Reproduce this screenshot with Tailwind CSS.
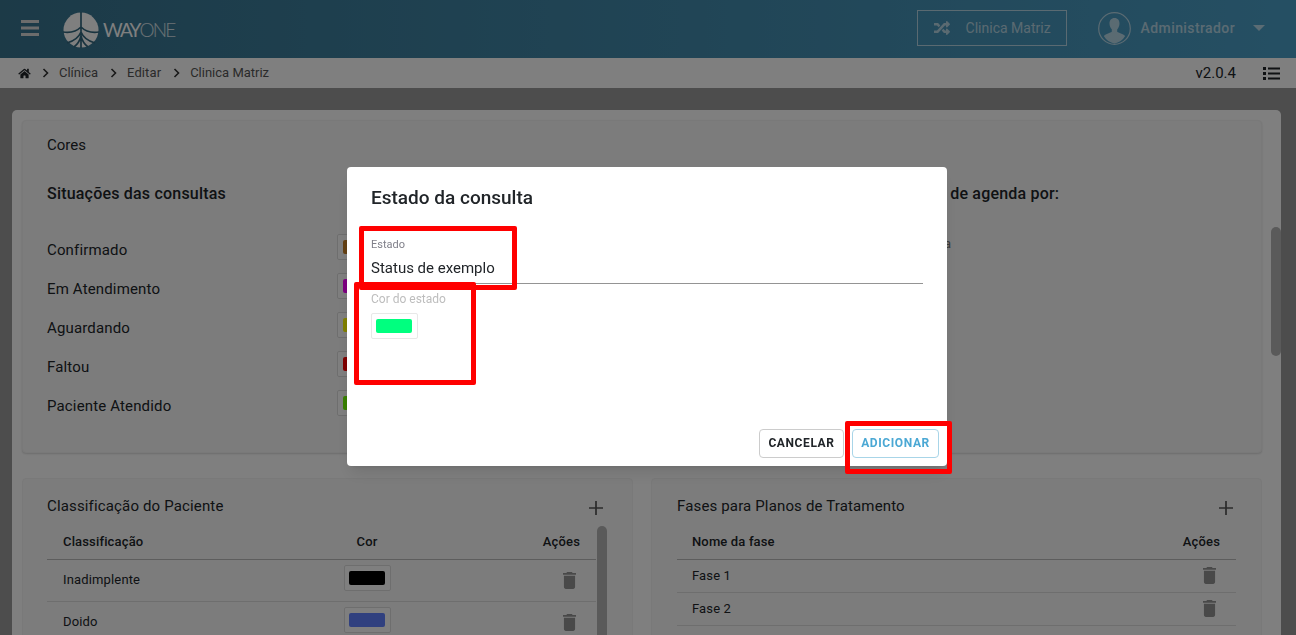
<!DOCTYPE html>
<html lang="pt-BR">
<head>
  <meta charset="UTF-8">
  <title>Clínica Matriz</title>
  <script src="https://cdn.jsdelivr.net/npm/@tailwindcss/browser@4"></script>
</head>
<body class="h-[635px] overflow-hidden bg-[#9a9a9a] font-['Roboto',sans-serif] text-[#212529]">
  <!-- topo -->
  <header class="flex h-[58px] items-center bg-gradient-to-r from-[#38748f] to-[#4b9fc7] pb-[2px] text-white">
    <svg class="ml-[21px] h-[16px] w-[18px]" viewBox="0 0 18 16" fill="#d8d8d8"><rect width="18" height="3" y="0"/><rect width="18" height="3" y="6.500"/><rect width="18" height="3" y="13"/></svg>
    <svg class="ml-[24px] mt-[4px] h-[36px] w-[36px]" viewBox="0 0 36 36">
      <circle cx="18" cy="18" r="17.500" fill="#ffffff"/>
      <path d="M18 0V36M18 15C14 19 7 21 0 20M18 15C22 19 29 21 36 20M18 20C16 25 11 29 4 31M18 20C20 25 25 29 32 31M18 24C17 28 15 32 11 35M18 24C19 28 21 32 25 35" stroke="#32677f" stroke-width="1.700" fill="none"/>
    </svg>
    <span class="ml-[4px] mt-[4px] font-['Lato',sans-serif] text-[19px] tracking-[-1.900px] text-white">WAY<span class="font-light text-white/80">ONE</span></span>
    <div class="ml-auto flex h-[36px] w-[150px] items-center border border-white/60 pl-[15px] text-[14px] text-white/60">
      <svg class="h-[16px] w-[18px]" viewBox="0 0 512 512" fill="currentColor"><path d="M504.971 359.029c9.373 9.373 9.373 24.569 0 33.941l-80 79.984c-15.01 15.01-40.971 4.49-40.971-16.971V416h-58.785a12.004 12.004 0 0 1-8.773-3.812l-70.556-75.596 53.333-57.143L352 336h32v-39.981c0-21.438 25.943-31.998 40.971-16.971l80 79.981zM12 176h84l52.781 56.551 53.333-57.143-70.556-75.596A11.999 11.999 0 0 0 122.785 96H12c-6.627 0-12 5.373-12 12v56c0 6.627 5.373 12 12 12zm372 0v39.984c0 21.46 25.961 31.98 40.971 16.971l80-79.984c9.373-9.373 9.373-24.569 0-33.941l-80-79.981C409.943 24.021 384 34.582 384 56.019V96h-58.785a12.004 12.004 0 0 0-8.773 3.812L96 336H12c-6.627 0-12 5.373-12 12v56c0 6.627 5.373 12 12 12h110.785c3.326 0 6.503-1.381 8.773-3.812L352 176h32z"/></svg>
      <span class="ml-[15px]">Clinica Matriz</span>
    </div>
    <svg class="ml-[31px] h-[33px] w-[33px]" viewBox="0 0 33 33">
      <circle cx="16.500" cy="16.500" r="15.800" fill="none" stroke="#ffffff" stroke-opacity=".6" stroke-width="1.200"/>
      <path d="M16.500 6c-3.200 0-5 2.300-5 5.500 0 2.400 1 4.500 2.300 5.800v2.400c-1.500 1.200-5.800 2-8 4.300A15.500 15.500 0 0 0 16.500 31.500a15.500 15.500 0 0 0 10.700-7.400c-2.200-2.300-6.500-3.100-8-4.300v-2.400c1.300-1.300 2.300-3.400 2.300-5.800 0-3.200-1.800-5.500-5-5.500z" fill="#ffffff" fill-opacity=".6"/>
    </svg>
    <span class="ml-[10px] text-[14px] font-medium tracking-[.4px] text-white/60">Administrador</span>
    <svg class="ml-[18px] mr-[31px] h-[6px] w-[12px]" viewBox="0 0 12 6" fill="#ffffff" fill-opacity=".6"><path d="M0 0H12L6 6Z"/></svg>
  </header>

  <!-- breadcrumb -->
  <nav class="flex h-[30px] items-center bg-white pl-[18px] pr-[16px] text-[13px] text-[#555]">
    <svg class="h-[11px] w-[13px]" viewBox="0 0 576 512" fill="#212529"><path d="M280.37 148.26L96 300.11V464a16 16 0 0 0 16 16l112.06-.29a16 16 0 0 0 15.92-16V368a16 16 0 0 1 16-16h64a16 16 0 0 1 16 16v95.64a16 16 0 0 0 16 16.05L464 480a16 16 0 0 0 16-16V300L295.67 148.26a12.19 12.19 0 0 0-15.3 0zM571.6 251.47L488 182.56V44.05a12 12 0 0 0-12-12h-56a12 12 0 0 0-12 12v72.61L318.47 43a48 48 0 0 0-61 0L4.34 251.47a12 12 0 0 0-1.6 16.9l25.5 31A12 12 0 0 0 45.15 301l235.22-193.74a12.19 12.19 0 0 1 15.3 0L530.9 301a12 12 0 0 0 16.9-1.6l25.5-31a12 12 0 0 0-1.7-16.93z"/></svg>
    <svg class="ml-[11px] h-[10px] w-[7px]" viewBox="0 0 7 10" fill="none" stroke="#333" stroke-width="1.600"><path d="M1.500 1L5.500 5 1.500 9"/></svg>
    <span class="ml-[10px]">Clínica</span>
    <svg class="ml-[12px] h-[10px] w-[7px]" viewBox="0 0 7 10" fill="none" stroke="#333" stroke-width="1.600"><path d="M1.500 1L5.500 5 1.500 9"/></svg>
    <span class="ml-[10px] tracking-[.1px]">Editar</span>
    <svg class="ml-[12px] h-[10px] w-[7px]" viewBox="0 0 7 10" fill="none" stroke="#333" stroke-width="1.600"><path d="M1.500 1L5.500 5 1.500 9"/></svg>
    <span class="ml-[10px]">Clinica Matriz</span>
    <span class="ml-auto text-[15px] text-[#212529]">v2.0.4</span>
    <svg class="ml-[27px] h-[13px] w-[17px]" viewBox="0 0 17 13" fill="#212529"><rect width="3" height="3" y="0"/><rect width="3" height="3" y="5"/><rect width="3" height="3" y="10"/><rect x="5" width="12" height="2" y="0.500"/><rect x="5" width="12" height="2" y="5.500"/><rect x="5" width="12" height="2" y="10.500"/></svg>
  </nav>

  <!-- conteudo -->
  <main class="h-[547px] overflow-hidden pl-[12px] pr-[15px] pt-[22px]">
    <div class="relative h-[600px] rounded-t-[5px] bg-white pl-[10px] pr-[19px] pt-[10px]">
      <div class="absolute right-0 top-[117px] h-[129px] w-[10px] rounded-full bg-[#b5b5b5]"></div>
      <section class="h-[333px] rounded-[4px] border border-[#f2f2f2] bg-[#f9f9f9] pl-[24px] pt-[14px] shadow-[0_1px_2px_rgba(0,0,0,.15)]">
        <p class="text-[15px] leading-[20px]">Cores</p>
        <div class="mt-[28px] flex">
          <div class="w-[813px]">
            <h2 class="text-[16px] font-medium leading-[22px] tracking-[.2px]">Situações das consultas</h2>
            <ul class="mt-[29px] space-y-[13px] text-[15px] tracking-[.15px]">
              <li class="flex h-[26px]"><span class="w-[290px] pt-[5px]">Confirmado</span><span class="flex h-[26px] w-[47px] items-center justify-center rounded-[2px] border border-[#ddd] bg-white"><span class="h-[14px] w-[36px] rounded-[2px] bg-[#c88228]"></span></span></li>
              <li class="flex h-[26px]"><span class="w-[290px] pt-[5px]">Em Atendimento</span><span class="flex h-[26px] w-[47px] items-center justify-center rounded-[2px] border border-[#ddd] bg-white"><span class="h-[14px] w-[36px] rounded-[2px] bg-[#f800ff]"></span></span></li>
              <li class="flex h-[26px]"><span class="w-[290px] pt-[5px]">Aguardando</span><span class="flex h-[26px] w-[47px] items-center justify-center rounded-[2px] border border-[#ddd] bg-white"><span class="h-[14px] w-[36px] rounded-[2px] bg-[#ffff00]"></span></span></li>
              <li class="flex h-[26px]"><span class="w-[290px] pt-[5px]">Faltou</span><span class="flex h-[26px] w-[47px] items-center justify-center rounded-[2px] border border-[#ddd] bg-white"><span class="h-[14px] w-[36px] rounded-[2px] bg-[#ff0000]"></span></span></li>
              <li class="flex h-[26px]"><span class="w-[290px] pt-[5px]">Paciente Atendido</span><span class="flex h-[26px] w-[47px] items-center justify-center rounded-[2px] border border-[#ddd] bg-white"><span class="h-[14px] w-[36px] rounded-[2px] bg-[#70ff00]"></span></span></li>
            </ul>
          </div>
          <div>
            <h2 class="whitespace-nowrap text-[16px] font-medium leading-[22px] tracking-[.2px]">Exibir cores de agenda por:</h2>
            <p class="-ml-[5px] mt-[29px] text-[13px] text-[#777]">Tipo de consulta</p>
          </div>
        </div>
      </section>
      <div class="mt-[25px] grid grid-cols-2 gap-[18px]">
        <section class="relative h-[300px] rounded-[4px] border border-[#f2f2f2] bg-[#f9f9f9] pl-[24px] pr-[36px] pt-[16px]">
          <div class="absolute right-[25px] top-[47px] h-[120px] w-[10px] rounded-full bg-[#b5b5b5]"></div>
          <div class="flex items-center justify-between">
            <h3 class="text-[15px] leading-[22px] tracking-[.15px]">Classificação do Paciente</h3>
            <svg class="-mr-[7px] mt-[4px] h-[14px] w-[14px]" viewBox="0 0 14 14" stroke="#555" stroke-width="1.700"><path d="M7 0V14M0 7H14"/></svg>
          </div>
          <table class="mt-[8px] w-full table-fixed text-[13px] tracking-[.15px]">
            <thead><tr class="h-[34px] border-b border-[#bbb]"><th class="w-[270px] pl-[16px] text-left font-medium">Classificação</th><th class="w-[100px] font-medium">Cor</th><th class="pr-[16px] text-right font-medium">Ações</th></tr></thead>
            <tbody>
              <tr class="h-[42px] border-b border-[#ddd]"><td class="pl-[16px]">Inadimplente</td><td class="pb-[4px]"><span class="mx-auto flex h-[26px] w-[47px] items-center justify-center rounded-[2px] border border-[#ddd] bg-white"><span class="h-[14px] w-[36px] rounded-[2px] bg-black"></span></span></td><td class="pr-[20px]"><svg class="ml-auto h-[17px] w-[13px]" viewBox="5 3 14 18" preserveAspectRatio="none" fill="#929292"><path d="M6 19c0 1.100.9 2 2 2h8c1.100 0 2-.9 2-2V7H6v12zM19 4h-3.500l-1-1h-5l-1 1H5v2h14V4z"/></svg></td></tr>
              <tr class="h-[42px] border-b border-[#ddd]"><td class="pl-[16px]">Doido</td><td class="pb-[4px]"><span class="mx-auto flex h-[26px] w-[47px] items-center justify-center rounded-[2px] border border-[#ddd] bg-white"><span class="h-[14px] w-[36px] rounded-[2px] bg-[#6080ff]"></span></span></td><td class="pr-[20px]"><svg class="ml-auto h-[17px] w-[13px]" viewBox="5 3 14 18" preserveAspectRatio="none" fill="#929292"><path d="M6 19c0 1.100.9 2 2 2h8c1.100 0 2-.9 2-2V7H6v12zM19 4h-3.500l-1-1h-5l-1 1H5v2h14V4z"/></svg></td></tr>
            </tbody>
          </table>
        </section>
        <section class="h-[300px] rounded-[4px] border border-[#f2f2f2] bg-[#f9f9f9] px-[25px] pt-[16px]">
          <div class="flex items-center justify-between">
            <h3 class="text-[15px] leading-[22px] tracking-[.15px]">Fases para Planos de Tratamento</h3>
            <svg class="mr-[3px] mt-[4px] h-[14px] w-[14px]" viewBox="0 0 14 14" stroke="#555" stroke-width="1.700"><path d="M7 0V14M0 7H14"/></svg>
          </div>
          <table class="mt-[8px] w-full text-[13px] tracking-[.15px]">
            <thead><tr class="h-[34px] border-b border-[#bbb]"><th class="pl-[15px] text-left font-medium">Nome da fase</th><th class="pr-[16px] text-right font-medium">Ações</th></tr></thead>
            <tbody>
              <tr class="h-[33px] border-b border-[#ddd]"><td class="pl-[15px]">Fase 1</td><td class="pr-[20px]"><svg class="ml-auto h-[17px] w-[13px]" viewBox="5 3 14 18" preserveAspectRatio="none" fill="#929292"><path d="M6 19c0 1.100.9 2 2 2h8c1.100 0 2-.9 2-2V7H6v12zM19 4h-3.500l-1-1h-5l-1 1H5v2h14V4z"/></svg></td></tr>
              <tr class="h-[33px] border-b border-[#ddd]"><td class="pl-[15px]">Fase 2</td><td class="pr-[20px]"><svg class="ml-auto h-[17px] w-[13px]" viewBox="5 3 14 18" preserveAspectRatio="none" fill="#929292"><path d="M6 19c0 1.100.9 2 2 2h8c1.100 0 2-.9 2-2V7H6v12zM19 4h-3.500l-1-1h-5l-1 1H5v2h14V4z"/></svg></td></tr>
            </tbody>
          </table>
        </section>
      </div>
    </div>
  </main>

  <!-- modal -->
  <div class="fixed inset-0 flex items-center justify-center bg-black/50 pb-[2px] pr-[2px]">
    <div class="flex h-[299px] w-[600px] flex-col rounded-[4px] bg-white px-[24px] pt-[18px] shadow-lg">
      <h1 class="text-[19px] font-medium leading-[26px]">Estado da consulta</h1>
      <label class="mt-[27px] block text-[11px] leading-[14px] text-[#80808a]">Estado</label>
      <div class="mt-[6px] h-[26px] border-b border-[#949494] text-[15px] leading-[20px]">Status de exemplo</div>
      <p class="mt-[8px] text-[12px] leading-[14px] text-[#bdbdbd]">Cor do estado</p>
      <span class="mt-[7px] flex h-[26px] w-[47px] items-center rounded-[2px] border border-[#e8e8e8] pl-[4px]"><span class="h-[14px] w-[36px] rounded-[2px] bg-[#00ff7f]"></span></span>
      <div class="-mr-[16px] mb-[8px] mt-auto flex justify-end gap-[8px]">
        <button class="h-[29px] w-[85px] rounded-[4px] border border-[#ccc] pb-[1px] text-[12px] font-bold tracking-[.6px]">CANCELAR</button>
        <button class="h-[29px] w-[87px] rounded-[4px] border border-[#a8d5e8] pb-[1px] text-[12px] font-bold tracking-[.6px] text-[#4ba8d4]">ADICIONAR</button>
      </div>
    </div>
  </div>

  <!-- marcacoes vermelhas do print -->
  <div class="absolute left-[359px] top-[226px] h-[64px] w-[158px] rounded-[2px] border-[5px] border-[#ff0000]"></div>
  <div class="absolute left-[354px] top-[282px] h-[103px] w-[122px] rounded-[2px] border-[5px] border-[#ff0000]"></div>
  <div class="absolute left-[845px] top-[421px] h-[53px] w-[107px] rounded-[2px] border-[5px] border-[#ff0000]"></div>
</body>
</html>
